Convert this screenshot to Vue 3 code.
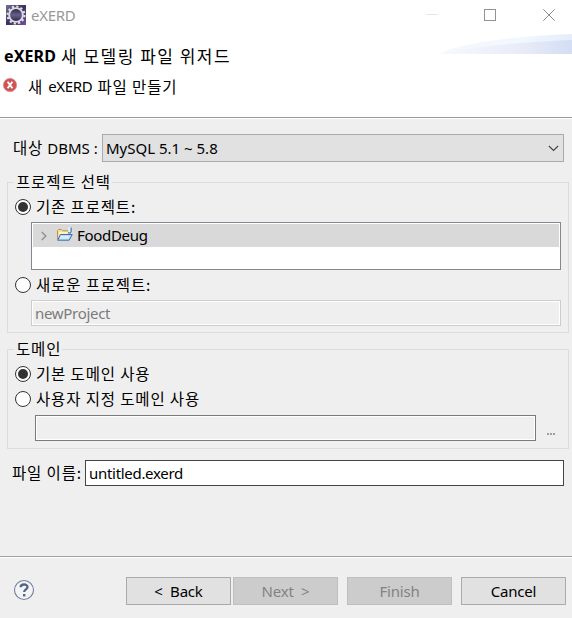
<script setup>
import { ref } from 'vue'

const projectMode = ref('existing')
const domainMode = ref('default')
const newProject = ref('newProject')
const fileName = ref('untitled.exerd')
</script>

<template>
  <div class="dialog">
    <header class="titlebar">
      <svg class="app-icon" width="20" height="20" viewBox="0 0 20 20">
        <defs>
          <linearGradient id="appBg" x1="0" y1="0" x2="1" y2="1">
            <stop offset="0" stop-color="#766d9b" />
            <stop offset="0.5" stop-color="#3b3160" />
            <stop offset="1" stop-color="#7450a5" />
          </linearGradient>
          <linearGradient id="lens" x1="0" y1="0" x2="0" y2="1">
            <stop offset="0" stop-color="#25213c" />
            <stop offset="0.5" stop-color="#66618d" />
            <stop offset="1" stop-color="#29203f" />
          </linearGradient>
        </defs>
        <rect width="20" height="20" fill="url(#appBg)" />
        <circle cx="10" cy="10" r="8.5" fill="none" stroke="#e4e2e4" stroke-width="2" stroke-dasharray="2.2 2.25" />
        <circle cx="10" cy="10" r="6.9" fill="url(#lens)" stroke="#dedbdd" stroke-width="1.9" />
      </svg>
      <span class="window-name">eXERD</span>
      <svg class="window-controls" width="132" height="30" viewBox="0 0 132 30" fill="none">
        <path d="M0 14.5h12" stroke="#e6e6e6" />
        <rect x="58.5" y="9.5" width="11" height="11" stroke="#929292" />
        <path d="M117.3 9.3l11.4 11.4M128.7 9.3l-11.4 11.4" stroke="#8c8c8c" />
      </svg>
    </header>

    <section class="banner">
      <svg class="swoosh" width="133" height="20" viewBox="0 0 133 20">
        <defs>
          <linearGradient id="swooshBack" x1="0" x2="1">
            <stop offset="0" stop-color="#f5f8fd" />
            <stop offset="0.6" stop-color="#f3f8fe" />
            <stop offset="1" stop-color="#e3edfb" />
          </linearGradient>
          <linearGradient id="swooshFront" x1="0" x2="1">
            <stop offset="0" stop-color="#f6f9fd" />
            <stop offset="0.62" stop-color="#e9ecf8" />
            <stop offset="1" stop-color="#d3def4" />
          </linearGradient>
        </defs>
        <path d="M0 20C20 9 72 2 133 0V20Z" fill="url(#swooshBack)" />
        <path d="M0 20C38 12 84 8 133 6V20Z" fill="url(#swooshFront)" />
      </svg>
      <h1 class="heading"><b>eXERD</b><span>새 모델링 파일 위저드</span></h1>
      <p class="message">
        <svg width="14" height="14" viewBox="0 0 14 14">
          <circle cx="7" cy="7" r="6.6" fill="#cf5555" stroke="#dd8585" stroke-width=".8" />
          <path d="M4.6 3.8l4.8 6.4M9.4 3.8l-4.8 6.4" stroke="#fff" stroke-width="1.9" />
        </svg>
        <span class="ko">새</span><span class="en">eXERD</span><span class="ko">파일 만들기</span>
      </p>
    </section>

    <main class="form">
      <div class="dbms-row">
        <label class="dbms-label"><span class="ko">대상</span><span class="dbms-name">DBMS :</span></label>
        <div class="combo">
          <span class="combo-value">MySQL 5.1 ~ 5.8</span>
          <svg width="11" height="7" viewBox="0 0 11 7" fill="none">
            <path d="M.9 1l4.6 4.5L10.1 1" stroke="#444" stroke-width="1.1" />
          </svg>
        </div>
      </div>

      <section class="group project-group">
        <h2 class="legend ko">프로젝트 선택</h2>
        <label class="option" @click="projectMode = 'existing'">
          <i class="radio" :class="{ checked: projectMode === 'existing' }"></i>
          <span class="ko">기존 프로젝트:</span>
        </label>
        <div class="tree">
          <div class="tree-row">
            <svg class="expander" width="6" height="10" viewBox="0 0 6 10" fill="none">
              <path d="M.8 1l4 4-4 4" stroke="#929292" stroke-width="1.5" />
            </svg>
            <svg class="folder" width="17" height="15" viewBox="0 0 17 15" fill="none">
              <path d="M1.5 12V3.5l1-1h3l1.3 1.3h6V9" fill="#f5dfa0" stroke="#bd9447" />
              <path d="M3 5h9v4H3z" fill="#fff2c7" />
              <path d="M4.4 7.5h11.8l-3 5.7H1.7z" fill="#b9dcf6" stroke="#4169b4" />
              <path d="M5 9h8.7l-1.4 2.8H3.6z" fill="#d9edfb" />
              <path d="M12.2 .2h4v6.6h-4z" fill="#e7eef5" />
              <path d="M15.2 .5v3.8c0 2-2.2 2.2-3 1.1" stroke="#4c7db0" stroke-width="1.3" />
            </svg>
            <span class="en project-name">FoodDeug</span>
          </div>
        </div>
        <label class="option new-option" @click="projectMode = 'new'">
          <i class="radio" :class="{ checked: projectMode === 'new' }"></i>
          <span class="ko">새로운 프로젝트:</span>
        </label>
        <div class="field disabled project-field">{{ newProject }}</div>
      </section>

      <section class="group domain-group">
        <h2 class="legend ko">도메인</h2>
        <label class="option" @click="domainMode = 'default'">
          <i class="radio" :class="{ checked: domainMode === 'default' }"></i>
          <span class="ko">기본 도메인 사용</span>
        </label>
        <label class="option" @click="domainMode = 'custom'">
          <i class="radio" :class="{ checked: domainMode === 'custom' }"></i>
          <span class="ko">사용자 지정 도메인 사용</span>
        </label>
        <div class="domain-path">
          <div class="field path-field"></div>
          <div class="browse"><i></i><i></i><i></i></div>
        </div>
      </section>

      <div class="file-row">
        <label class="ko">파일 이름:</label>
        <div class="field file-field">{{ fileName }}</div>
      </div>
    </main>

    <footer class="footer">
      <svg class="help" width="22" height="22" viewBox="0 0 22 22" fill="none">
        <circle cx="11" cy="11" r="9.5" fill="#f3f4f6" stroke="#70809d" stroke-width="1.1" />
        <path d="M7.6 8.2C7.7 4.7 14.5 4.6 14.5 8c0 2.5-3.3 2.4-3.3 5" stroke="#526587" stroke-width="2.3" />
        <path d="M10 15h2.4v2.4H10z" fill="#526587" />
      </svg>
      <button class="btn back">&lt;&nbsp; Back</button>
      <button class="btn next" disabled>Next &nbsp;&gt;</button>
      <button class="btn finish" disabled>Finish</button>
      <button class="btn cancel">Cancel</button>
    </footer>
  </div>
</template>

<style>
body {
  margin: 0;
}
</style>

<style scoped>
* {
  box-sizing: border-box;
}
.dialog {
  display: flex;
  flex-direction: column;
  width: 572px;
  height: 618px;
  overflow: hidden;
  background: #efefef;
  color: #000;
  font: 15px/20px "Noto Sans", "Noto Sans CJK KR", sans-serif;
  white-space: nowrap;
}
.ko {
  font-family: "Noto Sans CJK KR", sans-serif;
  font-size: 15.5px;
  font-weight: 400;
  letter-spacing: 0.85px;
}
.en {
  letter-spacing: -0.3px;
}
.titlebar {
  display: flex;
  height: 34px;
  background: #fff;
}
.app-icon {
  margin: 5px 0 0 6px;
}
.window-name {
  margin: 5px 0 0 5px;
  color: #999;
  letter-spacing: -0.3px;
}
.window-controls {
  margin-left: auto;
  margin-right: 14px;
}
.banner {
  position: relative;
  height: 85px;
  background: #fff;
  border-bottom: 1px solid #fff;
  box-shadow: inset 0 -1px #999;
}
.swoosh {
  position: absolute;
  top: 0;
  right: 0;
}
.heading {
  display: flex;
  gap: 5px;
  margin: 0;
  padding: 11px 0 0 4px;
  font-size: 16px;
  line-height: 22px;
  font-weight: 400;
}
.heading b {
  font-weight: 700;
  letter-spacing: 0.1px;
}
.heading span {
  font-family: "Noto Sans CJK KR", sans-serif;
  font-size: 17px;
  letter-spacing: 1.5px;
}
.message {
  display: flex;
  gap: 5px;
  margin: 10px 0 0 3px;
}
.message svg {
  margin: 1px 6px 0 0;
}
.message span {
  margin-top: -1px;
}
.form {
  display: flex;
  flex-direction: column;
  height: 437px;
  padding: 15px 3px 0 7px;
}
.dbms-row {
  display: flex;
  height: 28px;
  margin-right: 5px;
  align-items: center;
}
.dbms-label {
  display: flex;
  gap: 4px;
  width: 95px;
  padding-left: 6px;
}
.dbms-label .ko {
  margin-top: -1px;
}
.combo {
  display: flex;
  flex: 1;
  height: 28px;
  align-items: center;
  justify-content: space-between;
  padding: 0 4px 0 3px;
  border: 1px solid #ababab;
  background: #e1e1e1;
}
.group {
  border: 1px solid #dcdcdc;
}
.project-group {
  height: 151px;
  margin-top: 20px;
}
.domain-group {
  height: 100px;
  margin-top: 16px;
}
.legend {
  width: max-content;
  height: 20px;
  margin: -11px 0 0 6px;
  padding: 0 1px 0 2px;
  background: #efefef;
  line-height: 18px;
}
.option {
  display: flex;
  gap: 5px;
  height: 25px;
  padding-left: 7px;
  align-items: center;
}
.option .ko {
  padding-bottom: 2px;
}
.project-group .option {
  height: 30px;
}
.radio {
  display: grid;
  width: 16px;
  height: 16px;
  place-items: center;
  border: 1px solid #333;
  border-radius: 50%;
  background: #fff;
}
.radio.checked::after {
  content: "";
  width: 10px;
  height: 10px;
  border-radius: 50%;
  background: #333;
}
.tree {
  width: 530px;
  height: 48px;
  margin-left: 23px;
  padding: 1px;
  border: 1px solid #828790;
  background: #fff;
}
.tree-row {
  display: flex;
  height: 23px;
  align-items: center;
  padding-left: 8px;
  background: #d9d9d9;
}
.folder {
  margin: 0 4px 2px 9px;
}
.project-name {
  padding-bottom: 2px;
}
.field {
  height: 26px;
  padding: 0 3px;
  border: 1px solid #7a7a7a;
  background: #efefef;
  box-shadow: inset 0 0 0 1px #fff;
  line-height: 25px;
  letter-spacing: -0.3px;
}
.disabled {
  border-color: #ccc;
  color: #7b7b7b;
}
.project-field {
  width: 530px;
  margin-left: 23px;
}
.domain-group .legend {
  margin-bottom: 2px;
}
.domain-path {
  display: flex;
  margin: 4px 0 0 27px;
}
.path-field {
  width: 501px;
}
.browse {
  display: flex;
  gap: 1px;
  padding: 18px 0 0 11px;
}
.browse i {
  width: 2px;
  height: 2px;
  background: #a0a0a0;
}
.file-row {
  display: flex;
  margin: 11px 5px 0 0;
  align-items: center;
}
.file-row label {
  width: 78px;
  padding: 0 0 2px 5px;
}
.file-field {
  flex: 1;
  border-color: #444;
  background: #fff;
}
.footer {
  display: flex;
  height: 62px;
  padding: 20px 6px 0 13px;
  border-top: 1px solid #a0a0a0;
  box-shadow: inset 0 1px #fff;
}
.help {
  margin: 2px auto 0 0;
}
.btn {
  width: 105px;
  height: 28px;
  padding: 0;
  border: 1px solid #ababab;
  border-radius: 0;
  background: #e1e1e1;
  color: #000;
  font: inherit;
  letter-spacing: -0.2px;
}
.btn:disabled {
  border-color: #bfbfbf;
  background: #ccc;
  color: #838383;
}
.next {
  margin-left: 2px;
}
.finish,
.cancel {
  margin-left: 9px;
}
</style>
